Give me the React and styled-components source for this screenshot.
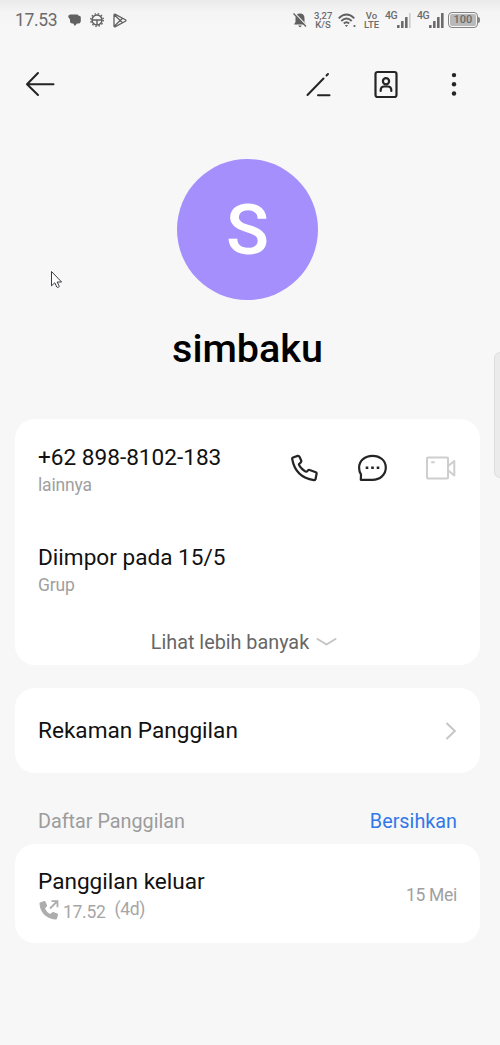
import React from 'react'
import styled, { createGlobalStyle } from 'styled-components';

const GlobalStyle = createGlobalStyle`
* {
  box-sizing: border-box;
}
body {
  margin: 0;
  background: #f7f7f7;
  font-family: Roboto, "Liberation Sans", sans-serif;
}
`;

const Screen = styled.div`
  position: relative;
  width: 500px;
  height: 1045px;
  overflow: hidden;
  background: linear-gradient(#eaeaea 0, #f4f4f4 12px, #f7f7f7 28px);
`;

const StatusBar = styled.header`
  display: flex;
  justify-content: space-between;
  height: 40px;
  padding: 0 20px 0 15px;
  color: #6b6b6b;
`;

const StatusGroup = styled.div`
  display: flex;
  align-items: center;
`;

const Clock = styled.span`
  width: 53px;
  font-size: 17.5px;
  line-height: 40px;
  letter-spacing: -0.35px;
`;

const StatusIcon = styled.svg`
  flex: none;
  margin-right: ${(p) => p.$gap || 0}px;
`;

const TinyStack = styled.div`
  width: ${(p) => p.$width}px;
  margin-right: ${(p) => p.$gap}px;
  font-size: 9.5px;
  font-weight: 500;
  line-height: 9px;
  text-align: center;
`;

const Network = styled.span`
  align-self: flex-start;
  width: 13px;
  margin: 10px -2px 0 0;
  font-size: 10.5px;
  font-weight: 500;
  line-height: 12px;
  letter-spacing: -0.4px;
`;

const Battery = styled.div`
  display: flex;
  align-items: center;
  margin-left: 3px;
`;

const BatteryBody = styled.div`
  width: 30px;
  height: 16px;
  padding: 1px;
  border: 1.5px solid #858585;
  border-radius: 4px;
`;

const BatteryLevel = styled.div`
  height: 100%;
  border-radius: 2px;
  background: #b9b9b9;
  font-size: 11px;
  font-weight: 500;
  line-height: 12px;
  text-align: center;
`;

const BatteryCap = styled.div`
  width: 2px;
  height: 6px;
  border-radius: 0 2px 2px 0;
  background: #858585;
`;

const Toolbar = styled.nav`
  display: flex;
  align-items: center;
  justify-content: space-between;
  height: 88px;
  padding: 0 30px 0 25px;
`;

const Actions = styled.div`
  display: flex;
  align-items: center;
  gap: ${(p) => p.$gap}px;
  padding-bottom: ${(p) => p.$lift || 0}px;
`;

const IconButton = styled.button`
  display: flex;
  padding: 0;
  border: none;
  background: none;
  color: ${(p) => p.$color || '#242424'};
`;

const Profile = styled.section`
  display: flex;
  flex-direction: column;
  align-items: center;
  height: 291px;
  padding: 31px 5px 0 0;
`;

const Avatar = styled.div`
  width: 141px;
  height: 141px;
  border-radius: 50%;
  background: #a48ffc;
  color: #fff;
  font-size: 71px;
  font-weight: 500;
  line-height: 142px;
  text-align: center;
`;

const Name = styled.h1`
  margin: 25px 0 0;
  color: #000;
  font-size: 39.5px;
  font-weight: 500;
  line-height: 48px;
`;

const Card = styled.section`
  width: 465px;
  height: ${(p) => p.$height}px;
  margin: 0 0 ${(p) => p.$gap || 0}px 15px;
  padding: 0 23px;
  border-radius: 20px;
  background: #fff;
`;

const Row = styled.div`
  display: flex;
  align-items: center;
  justify-content: space-between;
  height: ${(p) => p.$height}px;
`;

const Title = styled.div`
  color: #111;
  font-size: 22.6px;
  line-height: 30px;
`;

const Label = styled.div`
  color: #a0a0a0;
  font-size: 17.5px;
  line-height: 25px;
  letter-spacing: -0.15px;
`;

const More = styled.button`
  display: flex;
  align-items: center;
  justify-content: center;
  gap: 7px;
  width: 100%;
  height: 46px;
  padding: 0 7px 0 0;
  border: none;
  background: none;
  color: #666;
  font-family: inherit;
  font-size: 19.8px;
`;

const ListHeader = styled.div`
  display: flex;
  align-items: flex-end;
  justify-content: space-between;
  height: 71px;
  padding: 0 43px 9px 38px;
  color: #9c9c9c;
  font-size: 19.8px;
  line-height: 26px;
`;

const Clear = styled.span`
  color: #3179e8;
`;

const CallMeta = styled.div`
  display: flex;
  align-items: center;
  height: 27px;
  color: #a6a6a6;
  font-size: 17.5px;
  line-height: 20px;
  letter-spacing: -0.3px;
`;

const CallInfo = styled.div`
  padding-top: 3px;
`;

const CallTime = styled.span`
  margin: 3px 9px 0 3px;
`;

const CallCount = styled.span`
  margin-top: -2px;
`;

const CallDate = styled.span`
  padding-top: 2px;
  color: #a0a0a0;
  font-size: 17.5px;
  letter-spacing: -0.3px;
`;

const EdgeHandle = styled.div`
  position: absolute;
  top: 352px;
  right: -10px;
  width: 16px;
  height: 126px;
  border: 1px solid #dedede;
  border-radius: 6px;
  background: #ebebeb;
`;

const Pointer = styled.svg`
  position: absolute;
  top: 270px;
  left: 50px;
`;

const bars = [
  { x: 1, y: 12, h: 3 },
  { x: 5, y: 8, h: 7 },
  { x: 9, y: 4, h: 11 },
  { x: 13, y: 0, h: 15 },
];

const Signal = ({ level, gap }) => (
  <StatusIcon $gap={gap} width="17" height="15" viewBox="0 0 17 15" fill="currentColor">
    {bars.map((bar, i) => (
      <rect key={bar.x} x={bar.x} y={bar.y} width={i < level ? 2.6 : 1.6} height={bar.h} rx="0.5" opacity={i < level ? 1 : 0.3} />
    ))}
  </StatusIcon>
);

const Status = () => (
  <StatusBar>
    <StatusGroup>
      <Clock>17.53</Clock>
      <StatusIcon $gap={9} width="13" height="12" viewBox="0 0 13 12" fill="#606060">
        <path d="M2 .5h7a1.500 1.500 0 0 1 1.500 1.300h.8A1.700 1.700 0 0 1 12.800 3.500v3.300A2.800 2.800 0 0 1 10 9.600H9L6.800 12 5.300 9.600H4.500A2.500 2.500 0 0 1 2 7.100V5.500L.3 3V1.800z" />
      </StatusIcon>
      <StatusIcon $gap={9} width="14" height="14" viewBox="0 0 14 14" fill="none" stroke="#606060">
        <circle cx="7" cy="7" r="5" strokeWidth="1.500" />
        <circle cx="7" cy="7" r="6.300" strokeWidth="1.300" strokeDasharray="1.500 1.800" />
        <path d="M2 7h10M7 7v5" strokeWidth="1.400" />
      </StatusIcon>
      <StatusIcon width="14" height="15" viewBox="0 0 14 15" fill="none" stroke="#606060" strokeWidth="1.300" strokeLinejoin="round">
        <path d="M1 2.200v10.600q0 1.500 1.400.8l10-5.300q1-.8 0-1.600l-10-5.300Q1 .7 1 2.200zM1.500 2l8.300 8M1.500 13l8.300-8" />
      </StatusIcon>
    </StatusGroup>
    <StatusGroup>
      <StatusIcon $gap={7} width="14" height="16" viewBox="0 0 14 16">
        <path d="M7 1.500c3 0 4.500 2 4.500 4.800V10l1.500 2.500H1L2.500 10V6.300C2.500 3.500 4 1.500 7 1.500zM5.300 13.500h3.400Q8 15.300 7 15.300T5.300 13.500z" fill="#606060" />
        <path d="M1.500 1L14 14" stroke="#f5f5f5" strokeWidth="1.300" />
        <path d="M.5 1.500L13 14.500" stroke="#606060" strokeWidth="1.300" />
      </StatusIcon>
      <TinyStack $width={18} $gap={6}>3,27<br />K/S</TinyStack>
      <StatusIcon $gap={7} width="19" height="15" viewBox="0 0 19 15" fill="none" stroke="#606060" strokeWidth="1.800">
        <path d="M.7 5.300Q8.500-2.300 16.300 5.300M3.300 8Q8.500 3 13.700 8M5.800 10.500Q8.500 8 11.200 10.500" />
        <path d="M6.900 12.100h3.200L8.500 14z" fill="#606060" stroke="none" />
        <circle cx="16.500" cy="13" r="1.100" fill="#606060" stroke="none" />
      </StatusIcon>
      <TinyStack $width={15} $gap={6}>Vo<br />LTE</TinyStack>
      <Network>4G</Network>
      <Signal level={3} gap={4} />
      <Network>4G</Network>
      <Signal level={4} />
      <Battery>
        <BatteryBody><BatteryLevel>100</BatteryLevel></BatteryBody>
        <BatteryCap />
      </Battery>
    </StatusGroup>
  </StatusBar>
);

const App = () => {
  return (
    <Screen>
      <GlobalStyle />
      <Status />
      <Toolbar>
        <IconButton aria-label="Kembali">
          <svg width="30" height="26" viewBox="0 0 30 26" fill="none" stroke="currentColor" strokeWidth="2" strokeLinecap="round" strokeLinejoin="round">
            <path d="M13 2L2 13.300 13 24M2 13.300h26.500" />
          </svg>
        </IconButton>
        <Actions $gap={42}>
          <IconButton aria-label="Edit">
            <svg width="26" height="26" viewBox="0 0 26 26" fill="none" stroke="currentColor" strokeWidth="2" strokeLinecap="round">
              <path d="M1.500 24L17.500 7.500M20.500 4.500l1.500-1.500M12 24.200h11.500" />
            </svg>
          </IconButton>
          <IconButton aria-label="Kartu kontak">
            <svg width="24" height="28" viewBox="0 0 24 28" fill="none" stroke="currentColor" strokeWidth="2.200" strokeLinecap="round">
              <rect x="1.500" y="2" width="21" height="25" rx="2" />
              <circle cx="12" cy="11.300" r="3.100" />
              <path d="M6.700 21v-.8q0-3.700 3.500-3.700h3.600q3.500 0 3.500 3.700v.8" />
            </svg>
          </IconButton>
          <IconButton aria-label="Menu">
            <svg width="30" height="24" viewBox="0 0 30 24" fill="currentColor">
              <circle cx="14" cy="3.100" r="2.200" />
              <circle cx="14" cy="12.300" r="2.200" />
              <circle cx="14" cy="21.500" r="2.200" />
            </svg>
          </IconButton>
        </Actions>
      </Toolbar>

      <Profile>
        <Avatar>S</Avatar>
        <Name>simbaku</Name>
      </Profile>

      <Card $height={246} $gap={23}>
        <Row $height={102}>
          <div>
            <Title>+62 898-8102-183</Title>
            <Label>lainnya</Label>
          </div>
          <Actions $gap={39} $lift={4}>
            <IconButton aria-label="Telepon">
              <svg width="28" height="28" viewBox="0 0 28 28" fill="none" stroke="currentColor" strokeWidth="2.200" strokeLinejoin="round">
                <path d="M3 3.500L7.700 1.900Q8.900 1.600 9.500 2.800L11.200 6.500Q11.600 7.500 10.700 8.400L8.900 10.300Q9.900 13.300 14.800 17.200Q16.300 18.400 17.500 16.800Q18.400 15.400 19.700 16L25.800 18.200Q26.800 18.600 26.600 19.700L25.500 25.200Q25.200 26.400 23.800 26.100Q5.500 23.300 2.200 5Q2 3.900 3 3.500z" />
              </svg>
            </IconButton>
            <IconButton aria-label="Pesan">
              <svg width="30" height="28" viewBox="-1 0 30 28" fill="none" stroke="currentColor" strokeWidth="2.200" strokeLinejoin="round">
                <path d="M2.800 25.800L3 20.500Q1.100 18 1.100 13.700C1.100 6.500 7 1.800 14.500 1.800S27.800 6.500 27.800 13.500C27.800 20.700 22 25.800 14.500 25.800z" />
                <path d="M7.700 13.800h2.600M13.200 13.800h2.600M18.700 13.800h2.600" strokeWidth="2.600" />
              </svg>
            </IconButton>
            <IconButton aria-label="Panggilan video" $color="#cecece">
              <svg width="31" height="24" viewBox="0 0 31 24" fill="none" stroke="currentColor" strokeWidth="2" strokeLinejoin="round">
                <rect x="1" y="1.500" width="21" height="21" rx="1" />
                <path d="M22.500 9.800L28.300 5v14.500L22.500 14.800M5.200 6.200h3.500" />
              </svg>
            </IconButton>
          </Actions>
        </Row>
        <Row $height={98}>
          <div>
            <Title>Diimpor pada 15/5</Title>
            <Label>Grup</Label>
          </div>
        </Row>
        <More>
          Lihat lebih banyak
          <svg width="21" height="10" viewBox="0 0 21 10" fill="none" stroke="#c4c4c4" strokeWidth="2" strokeLinecap="round" strokeLinejoin="round">
            <path d="M1.500 2L10.500 7.500 19.500 2" />
          </svg>
        </More>
      </Card>

      <Card $height={85}>
        <Row $height={86}>
          <Title>Rekaman Panggilan</Title>
          <svg width="12" height="20" viewBox="0 0 12 20" fill="none" stroke="#c6c6c6" strokeWidth="2">
            <path d="M1.500 2L9.800 10 1.500 18" />
          </svg>
        </Row>
      </Card>

      <ListHeader>
        <span>Daftar Panggilan</span>
        <Clear>Bersihkan</Clear>
      </ListHeader>

      <Card $height={99}>
        <Row $height={99}>
          <CallInfo>
            <Title>Panggilan keluar</Title>
            <CallMeta>
              <svg width="22" height="22" viewBox="0 0 22 22" fill="#adadad">
                <path d="M2 3.500L6 2Q7 1.700 7.500 2.700L9 6Q9.300 7 8.500 7.800L7 9.500Q8.500 13 12 15L14 13.500Q15 12.800 16 13.200L19.300 14.500Q20.300 15 20 16L19 19.500Q18.700 20.600 17.500 20.500C8.500 20 2 13.500 1.500 4.800Q1.400 3.800 2 3.500z" />
                <path d="M12 9.500L19 2.500M13.500 2.200h6v6" fill="none" stroke="#adadad" strokeWidth="1.800" />
              </svg>
              <CallTime>17.52</CallTime>
              <CallCount>(4d)</CallCount>
            </CallMeta>
          </CallInfo>
          <CallDate>15 Mei</CallDate>
        </Row>
      </Card>

      <EdgeHandle />
      <Pointer width="13" height="20" viewBox="0 0 13 20" fill="#fff" stroke="#3a3a44" strokeWidth="1">
        <path d="M1.500 1.500v14.300l3.300-3 2 4.200q.8.900 1.900.2.700-.5.400-1.300l-2-3.900h4.500z" />
      </Pointer>
    </Screen>
  )
}

export default App
